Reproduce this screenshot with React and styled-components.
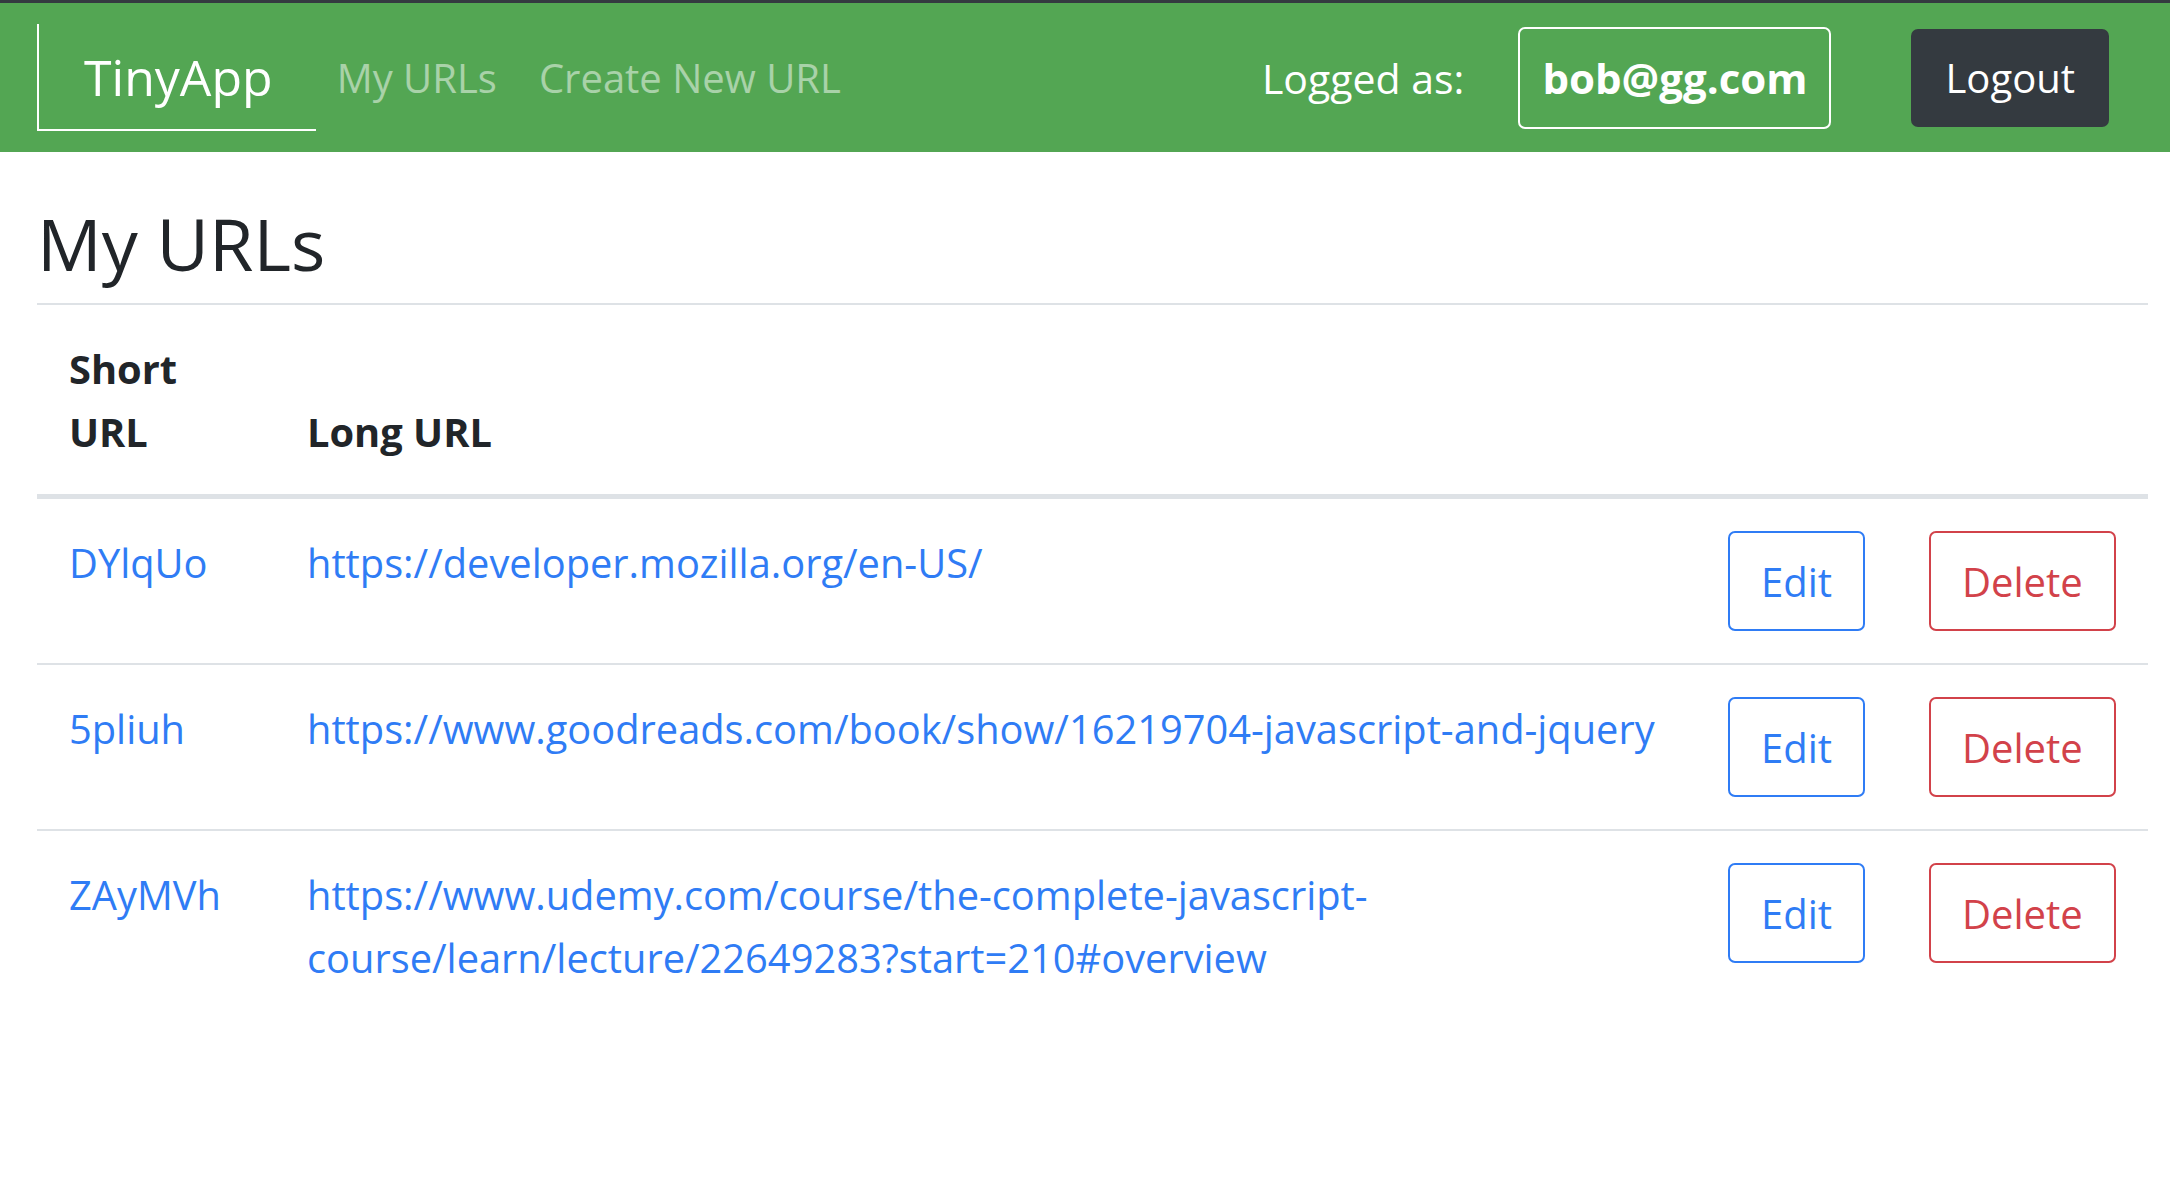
import styled, { createGlobalStyle } from "styled-components";

const GlobalStyle = createGlobalStyle`
  body {
    margin: 0;
    background: #fff;
    color: #212529;
    font-family: "Open Sans", "Noto Sans", sans-serif;
  }
  * { box-sizing: border-box; }
`;

const urls = [
  { id: "DYlqUo", long: "https://developer.mozilla.org/en-US/" },
  { id: "5pliuh", long: "https://www.goodreads.com/book/show/16219704-javascript-and-jquery" },
  { id: "ZAyMVh", long: "https://www.udemy.com/course/the-complete-javascript-course/learn/lecture/22649283?start=210#overview" },
];

const App = () => {
  return (
    <>
      <GlobalStyle />
      <Nav>
        <Brand href="#">TinyApp</Brand>
        <NavLink href="#">My URLs</NavLink>
        <NavLink href="#">Create New URL</NavLink>
        <Right>
          <Logged>Logged as:</Logged>
          <UserBox>bob@gg.com</UserBox>
          <Logout>Logout</Logout>
        </Right>
      </Nav>
      <Main>
        <Title>My URLs</Title>
        <Table>
          <Head>
            <Th>Short URL</Th>
            <Th>Long URL</Th>
            <Th />
            <Th />
          </Head>
          {urls.map((u, i) => (
            <Row key={u.id} first={i === 0}>
              <Td>
                <A href="#">{u.id}</A>
              </Td>
              <Td>
                <A href="#">{u.long}</A>
              </Td>
              <Td>
                <Button $color="#2f7cf5">Edit</Button>
              </Td>
              <Td>
                <Button $color="#d2424a">Delete</Button>
              </Td>
            </Row>
          ))}
        </Table>
      </Main>
    </>
  );
};

const Nav = styled.nav`
  display: flex;
  align-items: center;
  height: 152px;
  background: #53a653;
  border-top: 3px solid #343a40;
  padding: 0 61px 0 37px;
  font-size: 40px;
`;
const Brand = styled.a`
  display: flex;
  align-items: center;
  height: 107px;
  padding: 0 43px 0 45px;
  border-left: 2.5px solid #fff;
  border-bottom: 2.5px solid #fff;
  color: #fff;
  font-size: 50px;
  text-decoration: none;
`;
const NavLink = styled.a`
  padding: 0 21px;
  color: rgba(255, 255, 255, 0.5);
  text-decoration: none;
`;
const Right = styled.div`
  margin-left: auto;
  display: flex;
  align-items: center;
`;
const Logged = styled.span`
  color: #fff;
  font-size: 41px;
  margin-right: 54px;
`;
const UserBox = styled.div`
  display: flex;
  align-items: center;
  height: 102px;
  padding: 0 22px;
  border: 2.5px solid #fff;
  border-radius: 7px;
  color: #fff;
  font-size: 42px;
  font-weight: 700;
  margin-right: 80px;
`;
const Logout = styled.button`
  height: 98px;
  padding: 0 34px;
  background: #343a40;
  border: none;
  border-radius: 7px;
  color: #fff;
  font-family: inherit;
  font-size: 40px;
`;
const Main = styled.main`
  padding: 0 22px 0 37px;
`;
const Title = styled.h1`
  margin: 48px 0 17px 0;
  font-size: 72px;
  font-weight: 500;
  line-height: 86px;
`;
const Table = styled.div`
  font-size: 39.8px;
  line-height: 63px;
  border-top: 2.5px solid #dee2e6;
`;
const Grid = styled.div`
  display: grid;
  grid-template-columns: 238px 1fr 201px 251px;
`;
const Head = styled(Grid)`
  align-items: end;
  border-bottom: 5px solid #dee2e6;
`;
const Row = styled(Grid)`
  align-items: start;
  border-top: ${(p) => (p.first ? "none" : "2.5px solid #dee2e6")};
`;
const Th = styled.div`
  padding: 32px 31px 31px 32px;
  font-weight: 700;
`;
const Td = styled.div`
  padding: 32px 31px 32px 32px;
`;
const A = styled.a`
  color: #2f7cf5;
  text-decoration: none;
`;
const Button = styled.button`
  height: 100px;
  padding: 0 31px;
  background: #fff;
  border: 2.5px solid ${(p) => p.$color};
  border-radius: 7px;
  color: ${(p) => p.$color};
  font-family: inherit;
  font-size: 40px;
  white-space: nowrap;
`;

export default App;
